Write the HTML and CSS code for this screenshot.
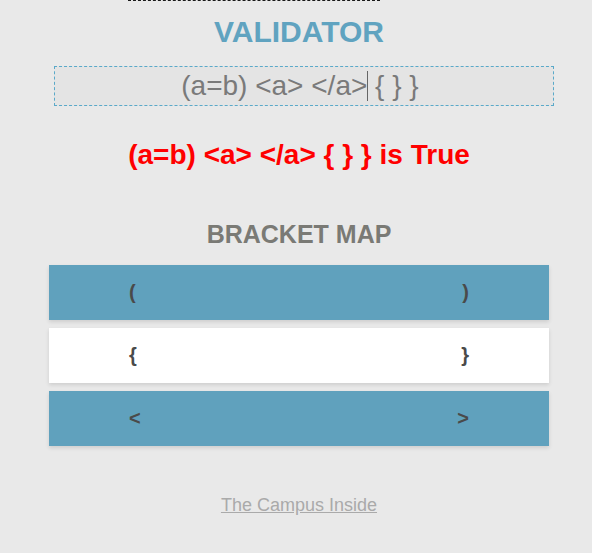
FILE: index.html
```html
<!DOCTYPE html>
<html>
<head>
<meta charset="utf-8">
<link rel="stylesheet" href="styles.css">
</head>
<body>
<div class="topline"></div>
<main class="app">
  <h1 class="title">VALIDATOR</h1>
  <div class="input"><span class="input-text">(a=b) &lt;a&gt; &lt;/a&gt;<span class="caret"></span> { } }</span></div>
  <p class="result">(a=b) &lt;a&gt; &lt;/a&gt; { } } is True</p>
  <h2 class="map-title">BRACKET MAP</h2>
  <div class="map">
    <div class="row row-blue"><span>(</span><span>)</span></div>
    <div class="row row-white"><span>{</span><span>}</span></div>
    <div class="row row-blue"><span>&lt;</span><span>&gt;</span></div>
  </div>
  <div class="footer"><a class="link" href="#">The Campus Inside</a></div>
</main>
</body>
</html>
```
FILE: styles.css
```css
html, body {
  margin: 0;
  padding: 0;
  background: #e9e9e9;
  font-family: "Liberation Sans", Arial, sans-serif;
}

.topline {
  margin-left: 128px;
  width: 252px;
  height: 0;
  border-top: 1px dashed #1a1a1a;
}

.app {
  width: 500px;
  margin-left: 49px;
  display: flex;
  flex-direction: column;
}

.title {
  margin: 13px 0 0;
  font-size: 30px;
  line-height: 36px;
  font-weight: bold;
  color: #60a3c0;
  text-align: center;
}

.input {
  margin: 16px 0 0 5px;
  width: 500px;
  height: 40px;
  box-sizing: border-box;
  border: 1px dashed #5aa9c9;
  background: #e4e4e4;
  display: flex;
  align-items: center;
  justify-content: center;
  font-size: 28px;
  color: #7a7a7a;
  padding-right: 8px;
}

.input-text {
  white-space: pre;
  line-height: 32px;
}

.caret {
  display: inline-block;
  width: 0;
  height: 30px;
  border-left: 1px solid #666;
  margin-right: -1px;
  vertical-align: -6px;
}

.result {
  margin: 33px 0 0;
  font-size: 28px;
  line-height: 32px;
  font-weight: bold;
  color: #ff0000;
  text-align: center;
}

.map-title {
  margin: 48px 0 0;
  font-size: 25px;
  line-height: 30px;
  font-weight: bold;
  color: #7a7a75;
  text-align: center;
}

.map {
  margin-top: 16px;
  display: flex;
  flex-direction: column;
  gap: 8px;
}

.row {
  height: 55px;
  display: flex;
  align-items: center;
  justify-content: space-between;
  padding: 0 80px;
  font-size: 20px;
  font-weight: bold;
  color: #4a4a4a;
  box-shadow: 0 2px 4px rgba(0, 0, 0, 0.12);
}

.row-blue {
  background: #60a1bd;
}

.row-white {
  background: #ffffff;
}

.footer {
  margin-top: 48px;
  text-align: center;
  font-size: 18px;
  line-height: 22px;
}

.link {
  color: #aaaaaa;
  text-decoration: underline;
}
```
